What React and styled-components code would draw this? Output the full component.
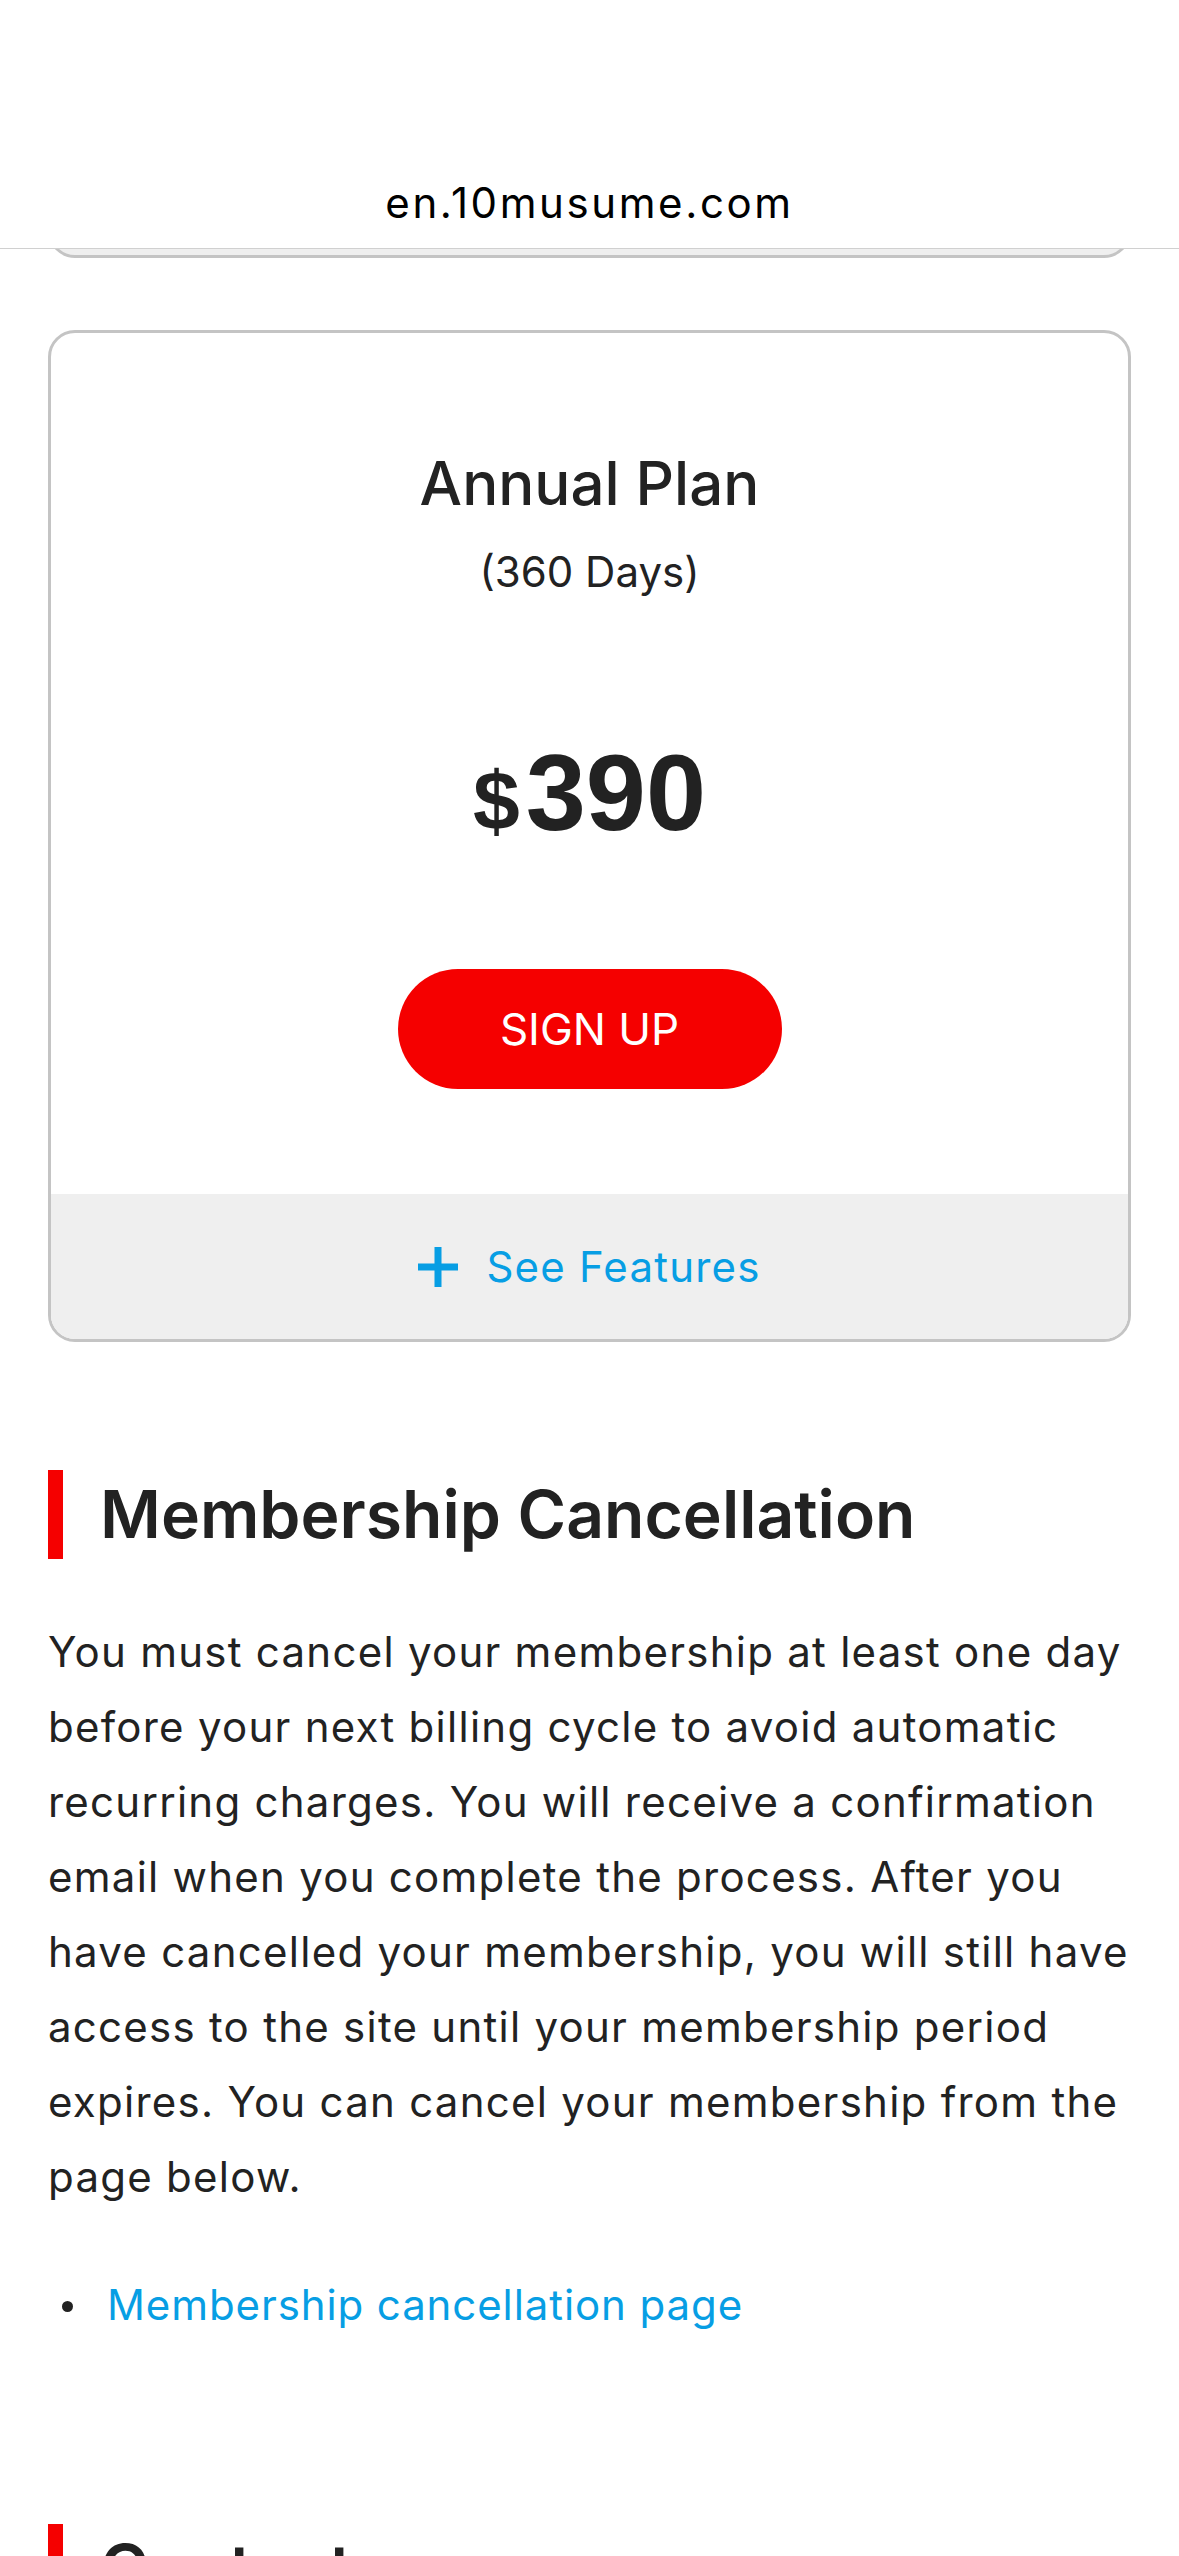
import React from "react";
import styled, { createGlobalStyle } from "styled-components";

const GlobalStyle = createGlobalStyle`
  body {
    margin: 0;
    background: #fff;
    color: #222;
    font-family: Inter, "Noto Sans", "Noto Sans CJK JP", sans-serif;
  }
`;

const AddressBar = styled.header`
  height: 249px;
  box-sizing: border-box;
  border-bottom: 1px solid #d0d0d0;
  display: flex;
  align-items: flex-end;
  justify-content: center;
  padding-bottom: 21px;
  font-size: 42px;
  line-height: 48px;
  letter-spacing: 2.6px;
  color: #000;
`;

const Main = styled.main`
  padding: 0 48px;
`;

const PrevCardTail = styled.div`
  height: 9px;
  overflow: hidden;
  div {
    height: 80px;
    margin-top: -71px;
    box-sizing: border-box;
    border: 3px solid #c4c4c4;
    border-radius: 27px;
    background: #efefef;
  }
`;

const PlanCard = styled.section`
  margin-top: 72px;
  border: 3px solid #c4c4c4;
  border-radius: 27px;
  overflow: hidden;
`;

const PlanBody = styled.div`
  padding: 114px 0 105px;
  display: flex;
  flex-direction: column;
  align-items: center;
  text-align: center;
`;

const PlanTitle = styled.h2`
  margin: 0;
  font-size: 60px;
  line-height: 72px;
  font-weight: 500;
`;

const PlanTerm = styled.p`
  margin: 23px 0 0;
  font-size: 42px;
  line-height: 60px;
`;

const Price = styled.div`
  margin-top: 131px;
  font-family: "Liberation Sans", Arial, sans-serif;
  font-size: 108px;
  line-height: 120px;
  font-weight: 700;
  color: #222;
  span {
    font-size: 84px;
    line-height: 1;
    margin-right: 6px;
  }
`;

const SignUp = styled.button`
  margin-top: 116px;
  width: 384px;
  height: 120px;
  border: 0;
  border-radius: 60px;
  background: #f50000;
  color: #fff;
  font-family: inherit;
  font-size: 44px;
`;

const FeaturesBar = styled.div`
  height: 145px;
  background: #efefef;
  display: flex;
  align-items: center;
  justify-content: center;
  gap: 28px;
  color: #079ee4;
  font-size: 42px;
  letter-spacing: 1.2px;
`;

const SectionHeading = styled.h2`
  margin: ${(p) => p.$top}px 0 0;
  border-left: 15px solid #f50000;
  padding-left: 37px;
  font-size: 66px;
  line-height: 89px;
  font-weight: 600;
  color: #222;
`;

const Paragraph = styled.p`
  margin: 55px 0 0;
  font-size: 42px;
  line-height: 75px;
  letter-spacing: 1.26px;
`;

const LinkList = styled.ul`
  margin: 53px 0 0;
  padding-left: 14px;
  list-style: none;
  font-size: 42px;
  line-height: 75px;
  letter-spacing: 0.9px;
  li {
    display: flex;
    align-items: center;
  }
  li::before {
    content: "";
    flex-shrink: 0;
    width: 11px;
    height: 11px;
    margin: 4px 34px 0 0;
    border-radius: 50%;
    background: #222;
  }
  a {
    color: #079ee4;
    text-decoration: none;
  }
`;

const PlusIcon = () => (
  <svg width="40" height="40" viewBox="0 0 40 40" fill="#079ee4">
    <rect x="16.5" y="0" width="7" height="40" />
    <rect x="0" y="16.5" width="40" height="7" />
  </svg>
);

export default function App() {
  return (
    <>
      <GlobalStyle />
      <AddressBar>en.10musume.com</AddressBar>
      <Main>
        <PrevCardTail>
          <div />
        </PrevCardTail>
        <PlanCard>
          <PlanBody>
            <PlanTitle>Annual Plan</PlanTitle>
            <PlanTerm>(360 Days)</PlanTerm>
            <Price>
              <span>$</span>390
            </Price>
            <SignUp>SIGN UP</SignUp>
          </PlanBody>
          <FeaturesBar>
            <PlusIcon />
            See Features
          </FeaturesBar>
        </PlanCard>
        <SectionHeading $top={128}>Membership Cancellation</SectionHeading>
        <Paragraph>
          You must cancel your membership at least one day before your next billing cycle to avoid automatic recurring
          charges. You will receive a confirmation email when you complete the process. After you have cancelled your
          membership, you will still have access to the site until your membership period expires. You can cancel your
          membership from the page below.
        </Paragraph>
        <LinkList>
          <li>
            <a href="#cancel">Membership cancellation page</a>
          </li>
        </LinkList>
        <SectionHeading $top={182}>Contact</SectionHeading>
      </Main>
    </>
  );
}
